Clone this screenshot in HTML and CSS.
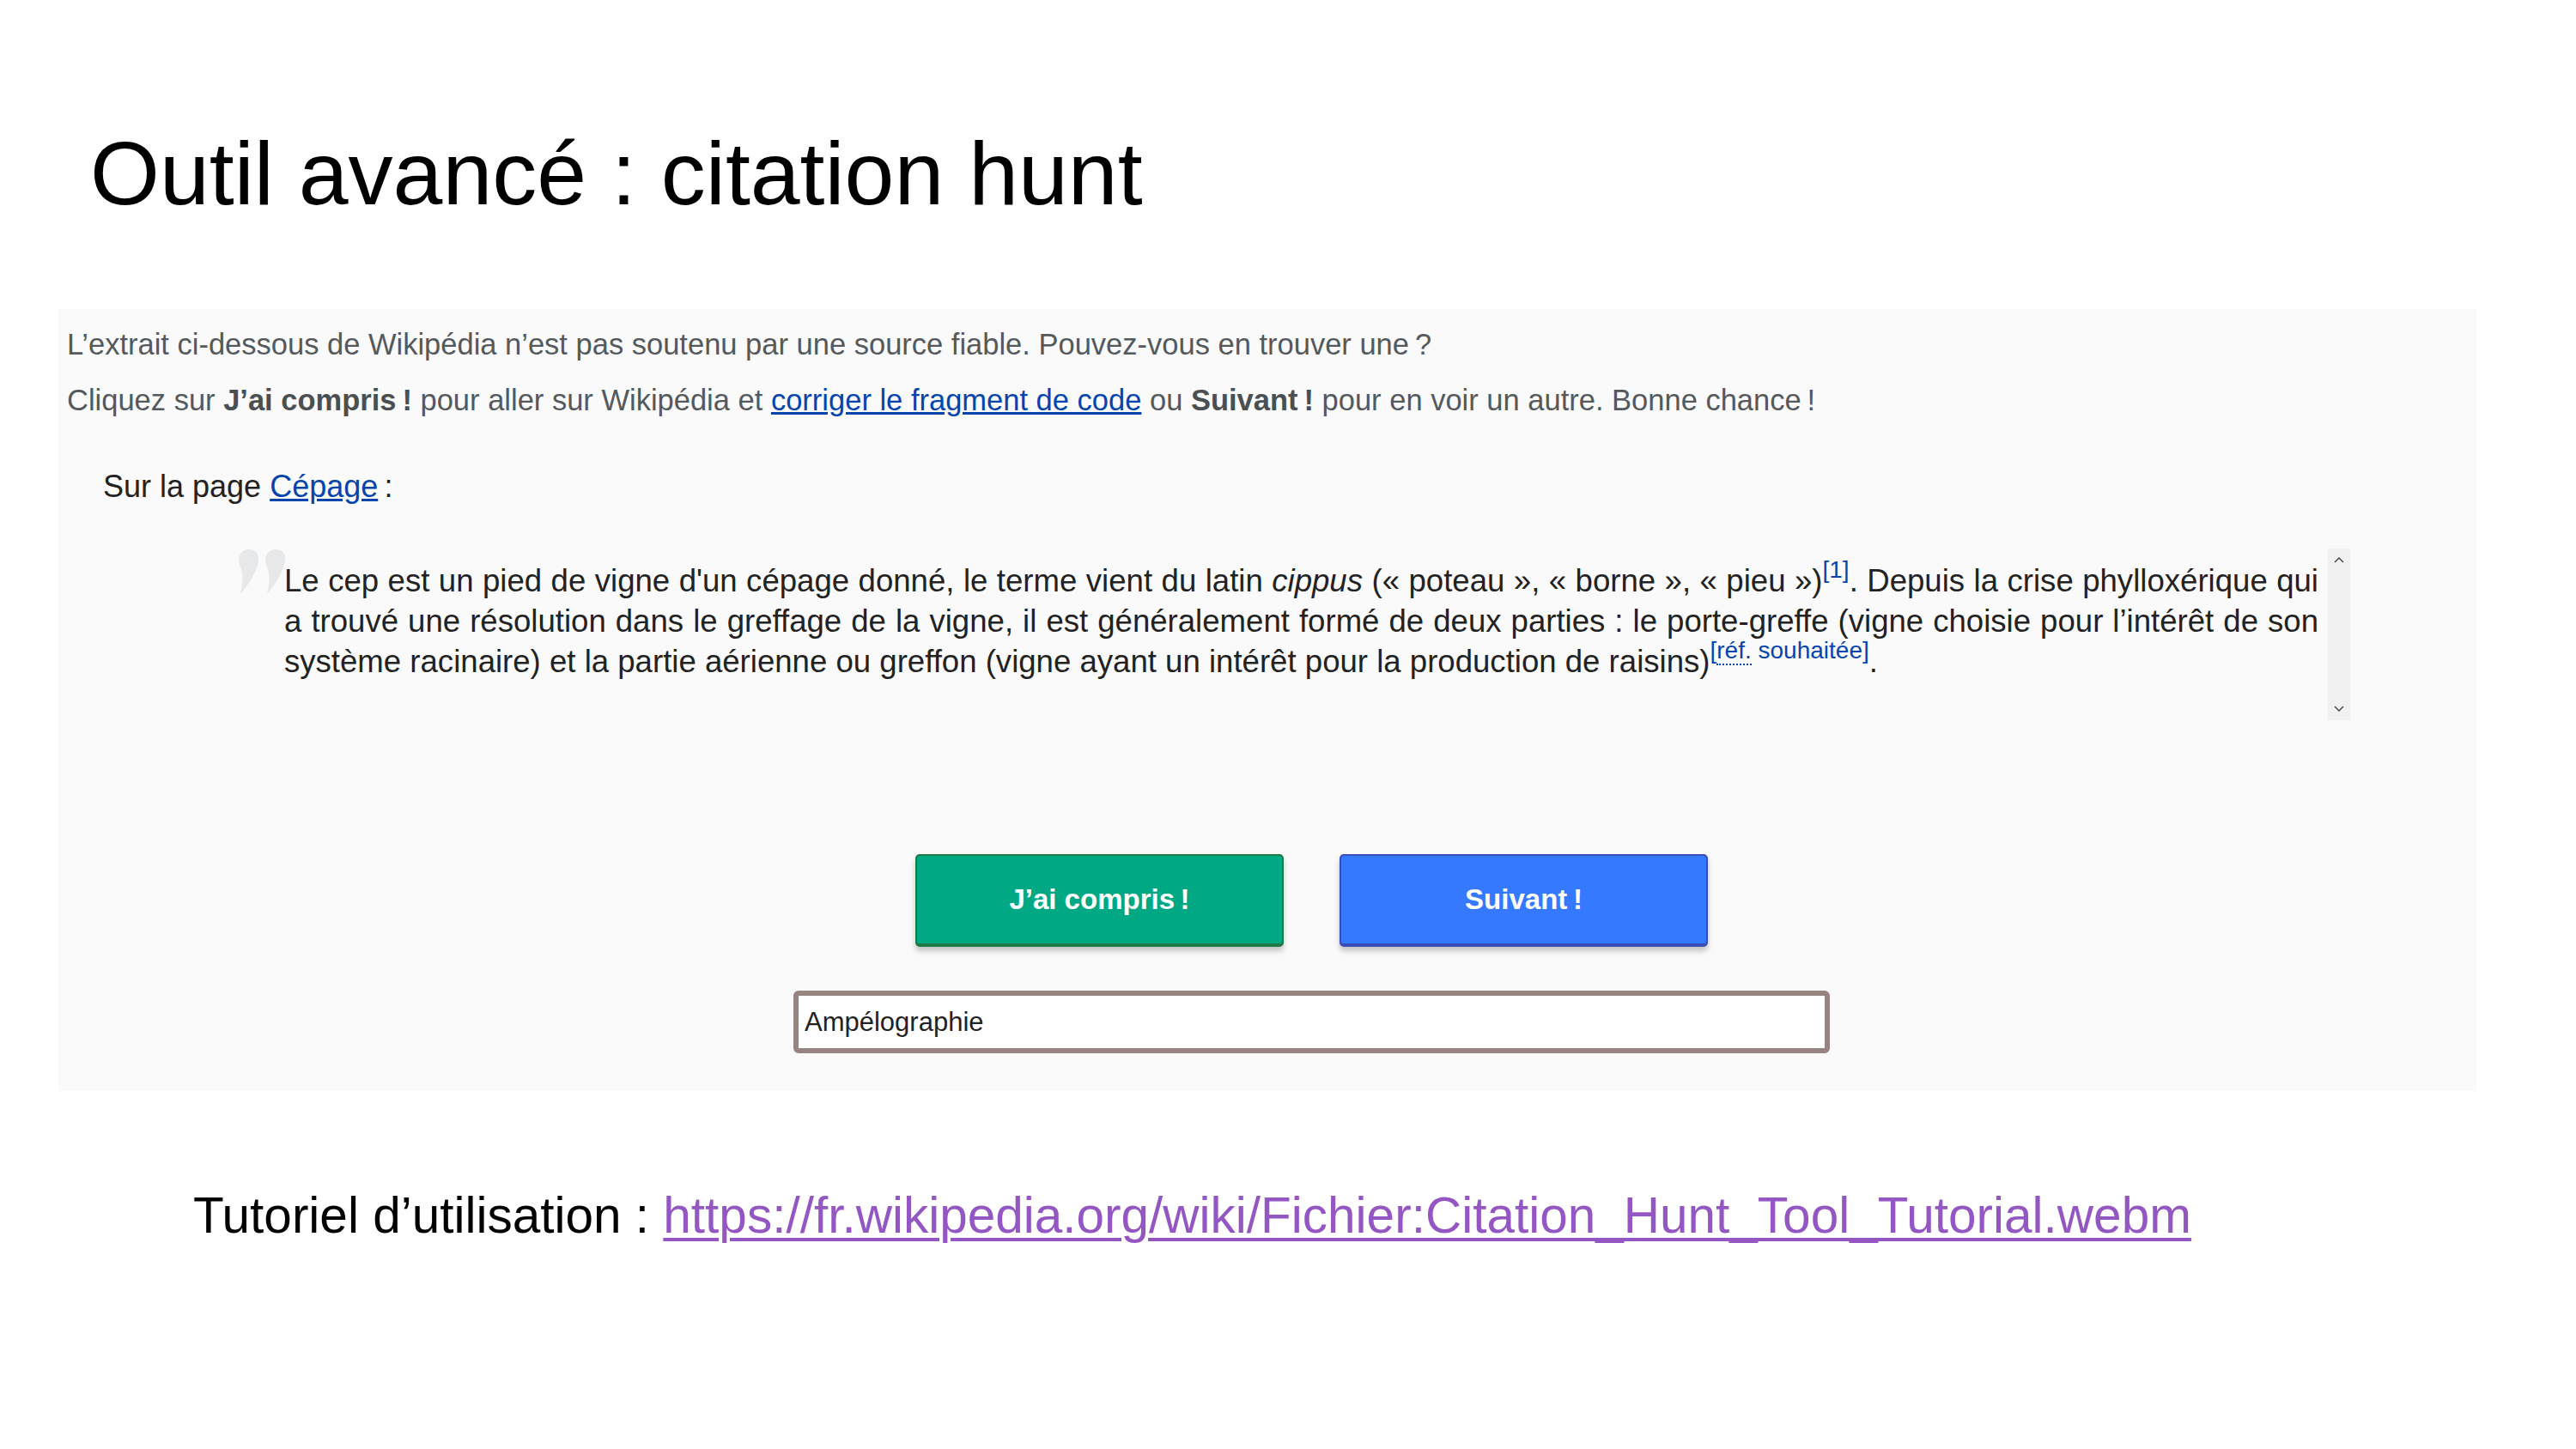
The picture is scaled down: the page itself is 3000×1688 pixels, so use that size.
FILE: index.html
```html
<!DOCTYPE html>
<html lang="fr">
<head>
<meta charset="utf-8">
<title>Outil avancé : citation hunt</title>
<link rel="stylesheet" href="styles.css">
</head>
<body>
<h1 class="title">Outil avancé : citation hunt</h1>
<section class="panel">
  <p class="intro">L’extrait ci-dessous de Wikipédia n’est pas soutenu par une source fiable. Pouvez-vous en trouver une&#8239;?</p>
  <p class="intro second">Cliquez sur <b>J’ai compris&#8239;!</b> pour aller sur Wikipédia et <a class="wlink" href="#">corriger le fragment de code</a> ou <b>Suivant&#8239;!</b> pour en voir un autre. Bonne chance&#8239;!</p>
  <p class="page">Sur la page <a class="wlink" href="#">Cépage</a>&#8239;:</p>
  <div class="quote-row">
    <svg class="qmark" viewBox="0 0 57 52" width="57" height="52" aria-hidden="true">
      <path d="M14 0 C22 0 26 5 25 13 C23 27 12 43 4 52 C7 40 8 28 3 18 C0 8 5 0 14 0 Z" fill="#e6e8ea"/>
      <path d="M45 0 C53 0 57 5 56 13 C54 27 43 43 35 52 C38 40 39 28 34 18 C31 8 36 0 45 0 Z" fill="#e6e8ea"/>
    </svg>
    <blockquote class="quote">Le cep est un pied de vigne d'un cépage donné, le terme vient du latin <i>cippus</i> («&nbsp;poteau&nbsp;», «&nbsp;borne&nbsp;», «&nbsp;pieu&nbsp;»)<sup class="ref">[1]</sup>. Depuis la crise phylloxérique qui a trouvé une résolution dans le greffage de la vigne, il est généralement formé de deux parties&nbsp;: le porte-greffe (vigne choisie pour l’intérêt de son système racinaire) et la partie aérienne ou greffon (vigne ayant un intérêt pour la production de raisins)<sup class="ref">[<span class="dotted">réf.</span> souhaitée]</sup>.</blockquote>
    <div class="scrollbar">
      <svg class="arrow" viewBox="0 0 12 7" width="12" height="7"><path d="M1 6 L6 1 L11 6" fill="none" stroke="#505050" stroke-width="1.6"/></svg>
      <svg class="arrow" viewBox="0 0 12 7" width="12" height="7"><path d="M1 1 L6 6 L11 1" fill="none" stroke="#505050" stroke-width="1.6"/></svg>
    </div>
  </div>
  <div class="actions">
    <div class="buttons">
      <button class="btn btn-green">J’ai compris&#8239;!</button>
      <button class="btn btn-blue">Suivant&#8239;!</button>
    </div>
    <div class="field">Ampélographie</div>
  </div>
</section>
<p class="tutorial">Tutoriel d’utilisation : <a class="tlink" href="#">https://fr.wikipedia.org/wiki/Fichier:Citation_Hunt_Tool_Tutorial.webm</a></p>
</body>
</html>
```
FILE: styles.css
```css
html, body {
  margin: 0;
  padding: 0;
  background: #ffffff;
}
body {
  width: 3000px;
  height: 1688px;
  overflow: hidden;
  font-family: "Liberation Sans", Arial, sans-serif;
  color: #000;
}
.title {
  margin: 150px 0 0 105px;
  font-size: 104px;
  line-height: 104px;
  font-weight: normal;
  color: #000;
}
.panel {
  margin: 106px 0 0 68px;
  width: 2816px;
  background: #fafafa;
  padding: 21px 0 44px 0;
  box-sizing: border-box;
}
.intro {
  margin: 0 0 0 10px;
  font-size: 34.5px;
  line-height: 40px;
  color: #54595d;
}
.intro.second {
  margin-top: 25px;
}
.intro b {
  color: #4a4f52;
}
.wlink {
  color: #0645ad;
  text-decoration: underline;
}
.page {
  margin: 60px 0 0 52px;
  font-size: 36px;
  line-height: 42px;
  color: #222;
}
.quote-row {
  display: flex;
  align-items: flex-start;
  margin: 51px 0 0 208px;
}
.qmark {
  flex: none;
  margin-top: 1px;
  width: 57px;
  height: 52px;
}
.quote {
  margin: 14px 0 0 -2px;
  width: 2369px;
  font-size: 36.6px;
  line-height: 47px;
  color: #222;
  text-align: justify;
}
.ref {
  font-size: 28px;
  line-height: 0;
  color: #0645ad;
  vertical-align: 0;
  position: relative;
  top: -16px;
}
.dotted {
  border-bottom: 2px dotted #0645ad;
}
.scrollbar {
  flex: none;
  margin-left: 11px;
  width: 26px;
  height: 200px;
  background: #f1f1f1;
  display: flex;
  flex-direction: column;
  justify-content: space-between;
  align-items: center;
  padding: 10px 0;
  box-sizing: border-box;
}
.arrow {
  display: block;
}
.actions {
  margin: 156px 0 0 856px;
  width: 1207px;
}
.buttons {
  display: flex;
  justify-content: center;
  gap: 65px;
}
.btn {
  width: 429px;
  height: 108px;
  border-radius: 5px;
  font-family: "Liberation Sans", Arial, sans-serif;
  font-size: 33px;
  font-weight: bold;
  color: #ffffff;
  border: 2px solid;
  box-shadow: 0 5px 6px rgba(0, 0, 0, 0.22);
  padding: 0;
}
.btn-green {
  background: #00a984;
  border-color: #1b7a45;
  border-bottom-width: 4px;
}
.btn-blue {
  background: #3479ff;
  border-color: #3a4cb8;
  border-bottom-width: 4px;
}
.field {
  margin-top: 51px;
  height: 73px;
  box-sizing: border-box;
  border: 6px solid #978481;
  border-radius: 6px;
  background: #fff;
  font-size: 31px;
  line-height: 61px;
  padding-left: 7px;
  color: #222;
}
.tutorial {
  margin: 110px 0 0 225px;
  font-size: 58.5px;
  line-height: 70px;
  color: #000;
}
.tlink {
  color: #9356c2;
  text-decoration: underline;
  text-decoration-thickness: 4px;
  text-underline-offset: 6px;
}
```
